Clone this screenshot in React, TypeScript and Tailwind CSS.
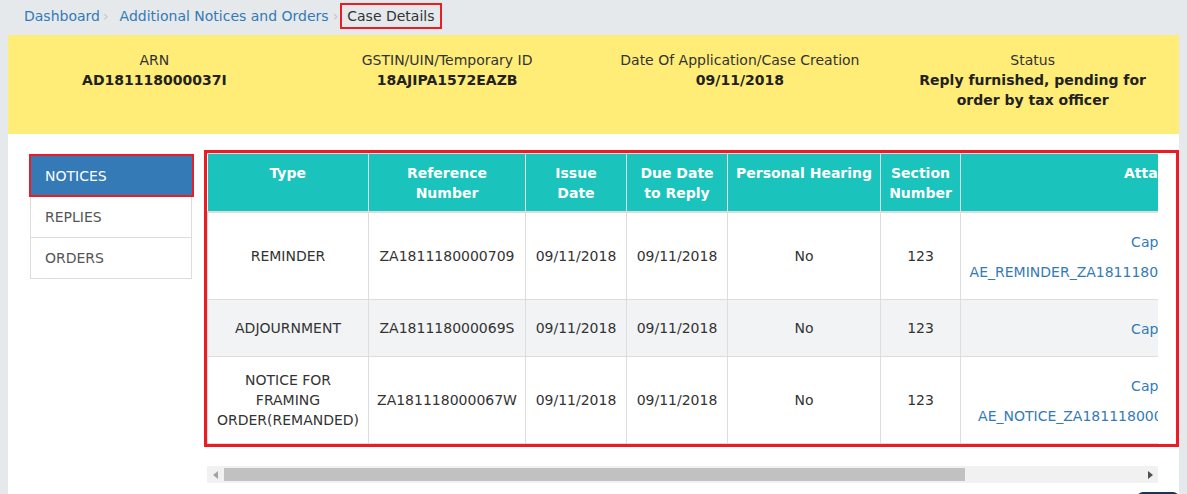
import React from "react";

const RED = "border-[#ed1c24]";

type Row = {
  type: React.ReactNode;
  ref: string;
  links: string[];
  bg: string;
};

const rows: Row[] = [
  {
    type: "REMINDER",
    ref: "ZA1811180000709",
    links: ["Capture.png", "AE_REMINDER_ZA1811180000709_091120181234567.pdf"],
    bg: "bg-white",
  },
  {
    type: "ADJOURNMENT",
    ref: "ZA181118000069S",
    links: ["Capture.png"],
    bg: "bg-[#f2f3f5]",
  },
  {
    type: (
      <>
        NOTICE FOR
        <br />
        FRAMING
        <br />
        ORDER(REMANDED)
      </>
    ),
    ref: "ZA181118000067W",
    links: ["Capture.png", "AE_NOTICE_ZA181118000067W_091120181234567.pdf"],
    bg: "bg-white",
  },
];

const th =
  "align-top pt-[9px] pb-[8px] px-[4px] leading-[20px] font-bold text-white text-center whitespace-nowrap border-r border-b-2 border-[#dddddd]";
const td =
  "align-middle text-center px-[8px] py-[12px] leading-[20px] border border-[#dddddd] whitespace-nowrap";

export default function App() {
  return (
    <div className="relative min-h-[494px] bg-[#e6e9ec] font-['DejaVu_Sans',Verdana,sans-serif] text-[14px] text-[#333333] overflow-hidden">
      {/* breadcrumb */}
      <div className="h-[35px] pt-[3px] pl-[24px] flex items-start">
        <div className="flex items-center h-[26px]">
          <span className="text-[#337ab7]">Dashboard</span>
          <span className="ml-[3px] mr-[11px] text-[#c4c4c4]">›</span>
          <span className="text-[#337ab7]">Additional Notices and Orders</span>
          <span className="ml-[4px] mr-[2px] text-[#c4c4c4]">›</span>
          <span className={`h-[26px] border-2 ${RED} px-[5px] flex items-center text-[#333333]`}>
            Case Details
          </span>
        </div>
      </div>

      <div className="mx-[8px]">
        {/* yellow summary */}
        <div className="h-[99px] bg-[#ffed78] grid grid-cols-4 pt-[15px] text-center leading-[20px]">
          <div className="px-4">
            <div>ARN</div>
            <div className="font-bold text-[#222222]">AD181118000037I</div>
          </div>
          <div className="px-4">
            <div>GSTIN/UIN/Temporary ID</div>
            <div className="font-bold text-[#222222]">18AJIPA1572EAZB</div>
          </div>
          <div className="px-4">
            <div>Date Of Application/Case Creation</div>
            <div className="font-bold text-[#222222]">09/11/2018</div>
          </div>
          <div className="px-[26px]">
            <div>Status</div>
            <div className="font-bold text-[#222222]">
              Reply furnished, pending for order by tax officer
            </div>
          </div>
        </div>

        {/* white content */}
        <div className="bg-white min-h-[360px] pt-[16px] flex items-start">
          {/* nav */}
          <div className="ml-[22px] mt-[6px] w-[162px] shrink-0">
            <div className="relative h-[41px] bg-[#337ab7] text-white flex items-center pl-[15px]">
              NOTICES
              <span className={`absolute -left-[1px] -right-[2px] -top-[2px] bottom-0 border-2 ${RED}`} />
            </div>
            <div className="h-[41px] border-x border-b border-[#dddddd] text-[#555555] flex items-center pl-[14px]">
              REPLIES
            </div>
            <div className="h-[41px] border-x border-b border-[#dddddd] text-[#555555] flex items-center pl-[14px]">
              ORDERS
            </div>
          </div>

          {/* table column */}
          <div className="ml-[12px] flex-1">
            <div className={`border-[3px] ${RED} pr-[18px]`}>
              <div className="w-[951px] overflow-hidden border-t border-[#dddddd]">
                <table className="table-fixed border-collapse w-[1181px]">
                  <colgroup>
                    <col className="w-[161px]" />
                    <col className="w-[157px]" />
                    <col className="w-[101px]" />
                    <col className="w-[101px]" />
                    <col className="w-[153px]" />
                    <col className="w-[80px]" />
                    <col className="w-[428px]" />
                  </colgroup>
                  <thead>
                    <tr className="bg-[#1ac3bb]">
                      <th className={th}>Type</th>
                      <th className={th}>
                        Reference
                        <br />
                        Number
                      </th>
                      <th className={th}>
                        Issue
                        <br />
                        Date
                      </th>
                      <th className={th}>
                        Due Date
                        <br />
                        to Reply
                      </th>
                      <th className={th}>Personal Hearing</th>
                      <th className={th}>
                        Section
                        <br />
                        Number
                      </th>
                      <th className={th}>Attachments</th>
                    </tr>
                  </thead>
                  <tbody>
                    {rows.map((r, i) => (
                      <tr key={i} className={r.bg}>
                        <td className={`${td} whitespace-normal`}>{r.type}</td>
                        <td className={td}>{r.ref}</td>
                        <td className={td}>09/11/2018</td>
                        <td className={td}>09/11/2018</td>
                        <td className={td}>No</td>
                        <td className={td}>123</td>
                        <td className={`${td} overflow-hidden`}>
                          <div className="flex flex-col items-center gap-[10px] pt-[7px] pb-[5px]">
                            {r.links.map((l) => (
                              <span key={l} className="text-[#337ab7] whitespace-nowrap">
                                {l}
                              </span>
                            ))}
                          </div>
                        </td>
                      </tr>
                    ))}
                  </tbody>
                </table>
              </div>
            </div>

            {/* fake horizontal scrollbar */}
            <div className="mt-[19px] ml-[3px] w-[951px] h-[17px] bg-[#f1f1f1] flex items-center">
              <div className="w-[17px] h-[17px] flex items-center justify-center">
                <svg width="6" height="8" viewBox="0 0 6 8">
                  <path d="M5 0 L0 4 L5 8 Z" fill="#a3a3a3" />
                </svg>
              </div>
              <div className="flex-1 h-[13px]">
                <div className="w-[741px] h-[13px] bg-[#c1c1c1]" />
              </div>
              <div className="w-[17px] h-[17px] flex items-center justify-center">
                <svg width="6" height="8" viewBox="0 0 6 8">
                  <path d="M1 0 L6 4 L1 8 Z" fill="#505050" />
                </svg>
              </div>
            </div>
          </div>
        </div>
      </div>

      {/* floating dark button at bottom right */}
      <div className="absolute left-[1137px] top-[492px] w-[42px] h-[12px] rounded-t-[6px] bg-[#15355b]" />
    </div>
  );
}
